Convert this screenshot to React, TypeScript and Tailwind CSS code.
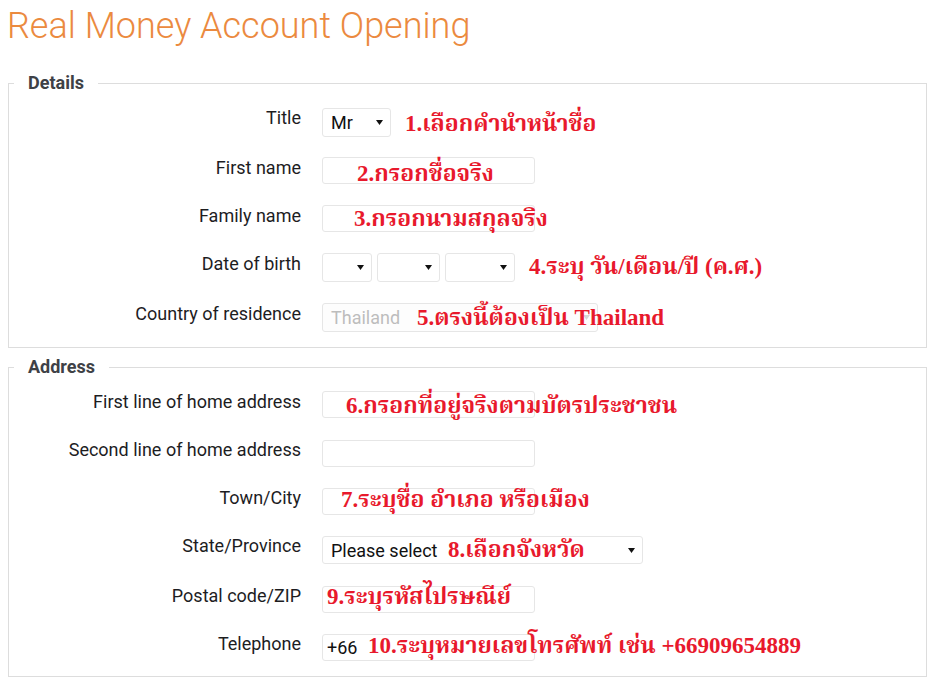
import React from "react";

const Arrow = ({ color = "#111" }: { color?: string }) => (
  <svg width="7" height="5" viewBox="0 0 7 5" className="shrink-0">
    <path d="M0 0 L7 0 L3.5 5 Z" fill={color} />
  </svg>
);

const Note = ({ className, children }: { className: string; children: React.ReactNode }) => (
  <span
    className={
      "absolute whitespace-nowrap font-bold text-[23px] leading-[24px] text-[#e8192c] font-['Liberation_Serif','Noto_Serif_Thai','Noto_Sans_Thai',serif] " +
      className
    }
  >
    {children}
  </span>
);

const Row = ({
  label,
  h,
  children,
}: {
  label: string;
  h: string;
  children: React.ReactNode;
}) => (
  <div className={"relative flex items-start " + h}>
    <div className="w-[292px] shrink-0 text-right text-[18px] leading-[24px] text-[#1d1d1f]">{label}</div>
    <div className="ml-[21px] flex gap-[5px]">{children}</div>
  </div>
);

const Input = ({ w = "w-[213px]", mt = "mt-[1px]", children }: { w?: string; mt?: string; children?: React.ReactNode }) => (
  <div
    className={
      "h-[27px] rounded-[3px] border border-[#e6e6e6] bg-white flex items-center px-[4px] text-[18px] text-[#111] " + w + " " + mt
    }
  >
    {children}
  </div>
);

const Select = ({ w, text, mt = "mt-[1px]", h = "h-[29px]" }: { w: string; text?: string; mt?: string; h?: string }) => (
  <div
    className={
      "rounded-[3px] border border-[#e6e6e6] bg-white flex items-center justify-between pl-[8px] pr-[7px] text-[18px] text-[#111] " +
      w + " " + mt + " " + h
    }
  >
    <span>{text ?? ""}</span>
    <Arrow />
  </div>
);

const Legend = ({ children }: { children: React.ReactNode }) => (
  <legend className="ml-[5px] px-[14px] text-[18px] font-bold leading-[24px] text-[#3e4146]">{children}</legend>
);

export default function App() {
  return (
    <div className="w-[940px] h-[686px] overflow-hidden bg-white font-['Roboto',sans-serif]">
      <h1 className="pl-[7px] pt-[2px] text-[36px] font-light leading-[48px] text-[#eb8a3f]">
        Real Money Account Opening
      </h1>

      <fieldset className="ml-[8px] mt-[21px] w-[919px] border border-[#dddddd] pb-[14px]">
        <Legend>Details</Legend>
        <div className="mt-[11px]">
          <Row label="Title" h="h-[50px]">
            <Select w="w-[69px]" text="Mr" mt="mt-[2px]" />
            <Note className="left-[396px] top-[6px]">1.เลือกคำนำหน้าชื่อ</Note>
          </Row>
          <Row label="First name" h="h-[48px]">
            <Input />
            <Note className="left-[348px] top-[6px]">2.กรอกชื่อจริง</Note>
          </Row>
          <Row label="Family name" h="h-[48px]">
            <Input />
            <Note className="left-[345px] top-[3px]">3.กรอกนามสกุลจริง</Note>
          </Row>
          <Row label="Date of birth" h="h-[50px]">
            <Select w="w-[50px]" />
            <Select w="w-[63px]" />
            <Select w="w-[70px]" />
            <Note className="left-[520px] top-[3px]">4.ระบุ วัน/เดือน/ปี (ค.ศ.)</Note>
          </Row>
          <Row label="Country of residence" h="h-[31px]">
            <div className="mt-[1px] h-[29px] w-[276px] rounded-[3px] border border-[#e6e6e6] bg-[#fdfdfd] flex items-center justify-between pl-[8px] pr-[7px] text-[18px] text-[#bdbdbd]">
              <span>Thailand</span>
              <Arrow color="#d6d6d6" />
            </div>
            <Note className="left-[408px] top-[4px]">5.ตรงนี้ต้องเป็น Thailand</Note>
          </Row>
        </div>
      </fieldset>

      <fieldset className="ml-[8px] mt-[7px] w-[919px] border border-[#dddddd] pb-[15px]">
        <Legend>Address</Legend>
        <div className="mt-[11px]">
          <Row label="First line of home address" h="h-[48px]">
            <Input />
            <Note className="left-[337px] top-[4px]">6.กรอกที่อยู่จริงตามบัตรประชาชน</Note>
          </Row>
          <Row label="Second line of home address" h="h-[48px]">
            <Input mt="mt-[2px]" />
          </Row>
          <Row label="Town/City" h="h-[48px]">
            <Input mt="mt-[2px]" />
            <Note className="left-[332px] top-[2px]">7.ระบุชื่อ อำเภอ หรือเมือง</Note>
          </Row>
          <Row label="State/Province" h="h-[50px]">
            <Select w="w-[321px]" text="Please select" mt="mt-[2px]" h="h-[28px]" />
            <Note className="left-[439px] top-[4px]">8.เลือกจังหวัด</Note>
          </Row>
          <Row label="Postal code/ZIP" h="h-[48px]">
            <Input mt="mt-[2px]" />
            <Note className="left-[318px] top-[1px]">9.ระบุรหัสไปรษณีย์</Note>
          </Row>
          <Row label="Telephone" h="h-[29px]">
            <Input mt="mt-[2px]">+66</Input>
            <Note className="left-[359px] top-[2px]">10.ระบุหมายเลขโทรศัพท์ เช่น +66909654889</Note>
          </Row>
        </div>
      </fieldset>
    </div>
  );
}
